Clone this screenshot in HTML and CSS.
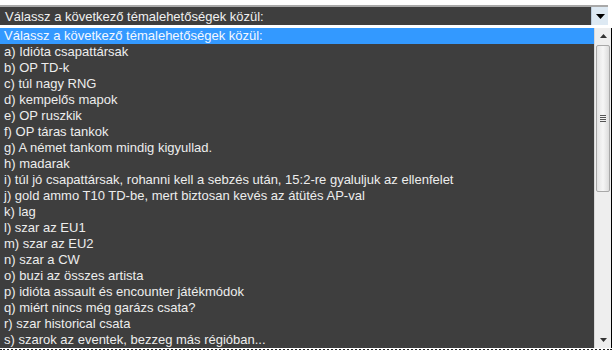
FILE: index.html
```html
<!DOCTYPE html>
<html lang="hu">

<head>
	<meta charset="UTF-8">
	<meta name="viewport" content="width=device-width, initial-scale=1.0">
	<title>Témalehetőségek</title>
	<link rel="stylesheet" href="styles.css">
</head>

<body>
	<div class="picker">
		<div class="picker-closed">
			<span class="picker-value">Válassz a következő témalehetőségek közül:</span>
			<span class="picker-arrow">
				<svg width="9" height="5" viewBox="0 0 9 5"><path d="M0 0H9L4.5 5Z" fill="#000"/></svg>
			</span>
		</div>

		<div class="picker-open">
			<ul class="option-list">
				<li class="option selected">Válassz a következő témalehetőségek közül:</li>
				<li class="option">a) Idióta csapattársak</li>
				<li class="option">b) OP TD-k</li>
				<li class="option">c) túl nagy RNG</li>
				<li class="option">d) kempelős mapok</li>
				<li class="option">e) OP ruszkik</li>
				<li class="option">f) OP táras tankok</li>
				<li class="option">g) A német tankom mindig kigyullad.</li>
				<li class="option">h) madarak</li>
				<li class="option">i) túl jó csapattársak, rohanni kell a sebzés után, 15:2-re gyaluljuk az ellenfelet</li>
				<li class="option">j) gold ammo T10 TD-be, mert biztosan kevés az átütés AP-val</li>
				<li class="option">k) lag</li>
				<li class="option">l) szar az EU1</li>
				<li class="option">m) szar az EU2</li>
				<li class="option">n) szar a CW</li>
				<li class="option">o) buzi az összes artista</li>
				<li class="option">p) idióta assault és encounter játékmódok</li>
				<li class="option">q) miért nincs még garázs csata?</li>
				<li class="option">r) szar historical csata</li>
				<li class="option">s) szarok az eventek, bezzeg más régióban...</li>
			</ul>
			<div class="scrollbar">
				<div class="scroll-btn">
					<svg width="7" height="4" viewBox="0 0 7 4"><path d="M0 4H7L3.5 0Z" fill="#333"/></svg>
				</div>
				<div class="scroll-track">
					<div class="scroll-thumb">
						<span class="grip"></span>
						<span class="grip"></span>
						<span class="grip"></span>
						<span class="grip"></span>
					</div>
				</div>
				<div class="scroll-btn">
					<svg width="7" height="4" viewBox="0 0 7 4"><path d="M0 0H7L3.5 4Z" fill="#333"/></svg>
				</div>
			</div>
		</div>
		<div class="page-edge"></div>
	</div>
</body>

</html>
```

FILE: styles.css
```css
body {
	margin: 0;
	background-color: #fff;
	font-family: "Liberation Sans", Arial, sans-serif;
	font-size: 13px;
}

/* Picker */

.picker {
	width: 612px;
	padding-top: 5px;
}

.picker-closed {
	width: 608px;
	height: 18px;
	display: flex;
	align-items: center;
	justify-content: space-between;
	background-color: #3e3e3e;
	border-top: 2px solid #a9a9a9;
	color: #f0f0f0;
}

.picker-value {
	padding-left: 5px;
}

.picker-arrow {
	width: 16px;
	height: 18px;
	display: flex;
	align-items: center;
	justify-content: center;
	background-color: #dde9f3;
	border-left: 1px solid #bcd;
}

.picker-open {
	margin-top: 3px;
	display: flex;
	height: 320px;
	border-right: 1px solid #000;
	background-color: #3e3e3e;
}

/* Options */

.option-list {
	flex: 1;
	list-style: none;
	margin: 0;
	padding: 0;
	overflow: hidden;
}

.option {
	height: 16px;
	line-height: 16px;
	padding-left: 4px;
	color: #ededed;
	white-space: nowrap;
}

.option.selected {
	background-color: #3399ff;
	color: #f4f8ff;
}

/* Scrollbar */

.scrollbar {
	width: 16px;
	display: flex;
	flex-direction: column;
	background-color: #eeeeee;
	border-left: 1px solid #d8d8d8;
}

.scroll-btn {
	height: 16px;
	display: flex;
	align-items: center;
	justify-content: center;
}

.scroll-track {
	flex: 1;
}

.scroll-thumb {
	height: 145px;
	margin: 1px 1px 0;
	display: flex;
	flex-direction: column;
	align-items: center;
	justify-content: center;
	gap: 1px;
	background: linear-gradient(to right, #e4e4e4, #f6f6f6 50%, #dcdcdc);
	border: 1px solid #a8a8a8;
	border-radius: 2px;
}

.grip {
	width: 6px;
	height: 1px;
	background-color: #555;
}

/* Page text peeking out below the open list */

.page-edge {
	height: 2px;
	margin-top: 1px;
	border-top: 2px dotted #222;
}
```
